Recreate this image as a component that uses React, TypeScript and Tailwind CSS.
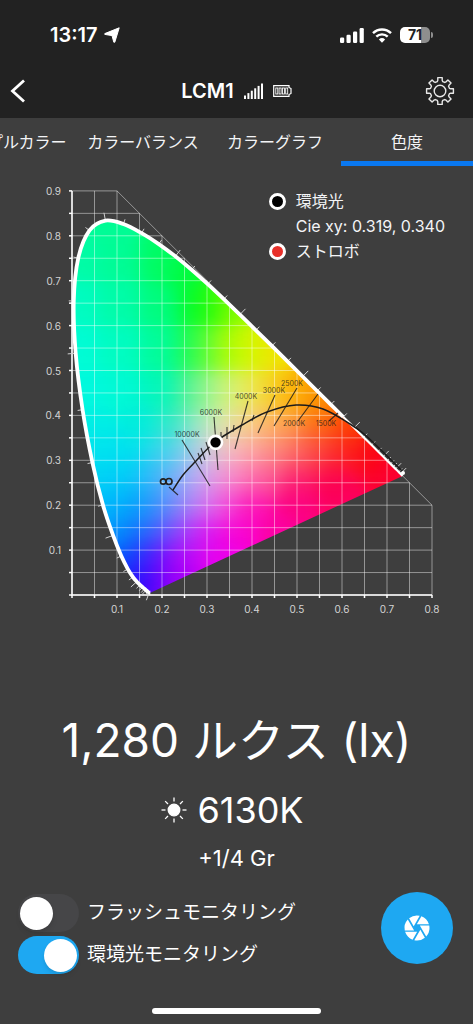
import { useState } from "react";
import { MdCamera } from "react-icons/md";

const tabs = ["サンプルカラー", "カラーバランス", "カラーグラフ", "色度"];

// CIE 1931 spectral locus: wavelength, x, y
const locus = [
  [380, 0.1741, 0.005],
  [420, 0.1714, 0.0051],
  [430, 0.1689, 0.0069],
  [440, 0.1644, 0.0109],
  [445, 0.1611, 0.0138],
  [450, 0.1566, 0.0177],
  [455, 0.151, 0.0227],
  [460, 0.144, 0.0297],
  [465, 0.1355, 0.0399],
  [470, 0.1241, 0.0578],
  [475, 0.1096, 0.0868],
  [480, 0.0913, 0.1327],
  [485, 0.0687, 0.2007],
  [490, 0.0454, 0.295],
  [495, 0.0235, 0.4127],
  [500, 0.0082, 0.5384],
  [505, 0.0039, 0.6548],
  [510, 0.0139, 0.7502],
  [515, 0.0389, 0.812],
  [520, 0.0743, 0.8338],
  [525, 0.1142, 0.8262],
  [530, 0.1547, 0.8059],
  [535, 0.1929, 0.7816],
  [540, 0.2296, 0.7543],
  [545, 0.2658, 0.7243],
  [550, 0.3016, 0.6923],
  [555, 0.3373, 0.6589],
  [560, 0.3731, 0.6245],
  [565, 0.4087, 0.5896],
  [570, 0.4441, 0.5547],
  [575, 0.4788, 0.5202],
  [580, 0.5125, 0.4866],
  [585, 0.5448, 0.4544],
  [590, 0.5752, 0.4242],
  [595, 0.6029, 0.3965],
  [600, 0.627, 0.3725],
  [605, 0.6482, 0.3514],
  [610, 0.6658, 0.334],
  [615, 0.6801, 0.3197],
  [620, 0.6915, 0.3083],
  [625, 0.7006, 0.2993],
  [630, 0.7079, 0.292],
  [635, 0.714, 0.2859],
  [640, 0.719, 0.2809],
  [650, 0.726, 0.274],
  [660, 0.73, 0.27],
  [700, 0.7347, 0.2653],
];

type Point = [number, number];

const px = (x: number) => 72 + x * 450;
const py = (y: number) => 429 - y * 449;

const toPoint = ([, x, y]: number[]): Point => [px(x), py(y)];

// Catmull-Rom spline through the points
function smooth(points: Point[]) {
  let d = `M${points[0][0]} ${points[0][1]}`;
  for (let i = 0; i < points.length - 1; i++) {
    const p0 = points[i - 1] ?? points[i];
    const p1 = points[i];
    const p2 = points[i + 1];
    const p3 = points[i + 2] ?? p2;
    d += `C${p1[0] + (p2[0] - p0[0]) / 6} ${p1[1] + (p2[1] - p0[1]) / 6} ${p2[0] - (p3[0] - p1[0]) / 6} ${p2[1] - (p3[1] - p1[1]) / 6} ${p2[0]} ${p2[1]}`;
  }
  return d;
}

const locusPath = smooth(locus.map(toPoint));
const thickLocus = smooth(locus.filter((l) => l[0] <= 595).map(toPoint));
const thinLocus = smooth(locus.filter((l) => l[0] >= 595).map(toPoint));

const wavelengthTicks = locus.slice(1, -1).map((l, i) => {
  const [ax, ay] = toPoint(locus[i]);
  const [bx, by] = toPoint(locus[i + 2]);
  const [x, y] = toPoint(l);
  const len = Math.hypot(bx - ax, by - ay) || 1;
  const size = l[0] % 20 === 0 ? 8 : 5;
  return { x, y, dx: ((by - ay) / len) * size, dy: (-(bx - ax) / len) * size };
});

// colour samples inside the gamut: x, y, r, g, b
const samples = [
  [0.08, 0.83, 0, 255, 150],
  [0.03, 0.75, 0, 255, 168],
  [0.1, 0.75, 0, 255, 150],
  [0.2, 0.75, 0, 255, 105],
  [0.25, 0.73, 0, 255, 60],
  [0.02, 0.65, 0, 255, 195],
  [0.1, 0.65, 0, 255, 170],
  [0.2, 0.65, 0, 255, 130],
  [0.27, 0.65, 0, 255, 50],
  [0.31, 0.65, 50, 255, 0],
  [0.36, 0.65, 140, 255, 0],
  [0.02, 0.55, 0, 255, 215],
  [0.1, 0.55, 0, 255, 195],
  [0.2, 0.55, 0, 255, 160],
  [0.26, 0.55, 20, 255, 90],
  [0.3, 0.55, 110, 255, 50],
  [0.35, 0.55, 180, 255, 0],
  [0.4, 0.55, 215, 250, 0],
  [0.45, 0.55, 245, 230, 0],
  [0.03, 0.45, 0, 252, 225],
  [0.1, 0.45, 0, 252, 215],
  [0.2, 0.45, 0, 250, 190],
  [0.26, 0.45, 70, 245, 150],
  [0.3, 0.45, 165, 248, 140],
  [0.35, 0.45, 212, 245, 120],
  [0.4, 0.45, 240, 235, 80],
  [0.45, 0.45, 252, 208, 30],
  [0.5, 0.45, 255, 172, 0],
  [0.56, 0.45, 255, 145, 0],
  [0.05, 0.38, 0, 240, 232],
  [0.15, 0.38, 0, 240, 222],
  [0.22, 0.38, 50, 235, 200],
  [0.28, 0.38, 155, 235, 200],
  [0.33, 0.38, 225, 235, 175],
  [0.38, 0.38, 245, 215, 145],
  [0.43, 0.38, 255, 188, 110],
  [0.48, 0.38, 255, 158, 70],
  [0.55, 0.38, 255, 112, 15],
  [0.62, 0.38, 255, 65, 0],
  [0.05, 0.32, 0, 230, 242],
  [0.12, 0.32, 0, 228, 242],
  [0.2, 0.32, 50, 215, 240],
  [0.25, 0.32, 135, 208, 240],
  [0.3, 0.32, 210, 205, 225],
  [0.35, 0.32, 250, 188, 200],
  [0.4, 0.32, 255, 168, 168],
  [0.45, 0.32, 255, 138, 132],
  [0.5, 0.32, 255, 105, 100],
  [0.55, 0.32, 255, 70, 65],
  [0.6, 0.32, 255, 35, 30],
  [0.67, 0.32, 255, 5, 20],
  [0.06, 0.26, 0, 212, 248],
  [0.12, 0.26, 0, 205, 252],
  [0.18, 0.26, 50, 185, 252],
  [0.23, 0.26, 130, 175, 252],
  [0.28, 0.26, 195, 168, 248],
  [0.33, 0.26, 242, 150, 222],
  [0.38, 0.26, 255, 122, 188],
  [0.43, 0.26, 255, 85, 152],
  [0.5, 0.26, 255, 30, 110],
  [0.58, 0.26, 255, 0, 80],
  [0.71, 0.26, 255, 0, 50],
  [0.08, 0.2, 0, 185, 255],
  [0.14, 0.2, 0, 165, 255],
  [0.19, 0.2, 60, 145, 255],
  [0.24, 0.2, 140, 138, 252],
  [0.29, 0.2, 208, 125, 246],
  [0.34, 0.2, 248, 75, 222],
  [0.4, 0.2, 255, 15, 182],
  [0.5, 0.2, 255, 0, 130],
  [0.6, 0.2, 255, 0, 98],
  [0.1, 0.14, 0, 150, 255],
  [0.15, 0.14, 20, 110, 255],
  [0.2, 0.14, 90, 88, 255],
  [0.25, 0.14, 165, 60, 255],
  [0.3, 0.14, 225, 15, 242],
  [0.37, 0.14, 252, 0, 212],
  [0.46, 0.14, 255, 0, 165],
  [0.12, 0.08, 0, 85, 255],
  [0.16, 0.08, 50, 35, 255],
  [0.2, 0.08, 125, 5, 255],
  [0.25, 0.08, 195, 0, 250],
  [0.33, 0.08, 235, 0, 240],
  [0.14, 0.03, 25, 15, 255],
  [0.17, 0.03, 85, 0, 255],
  [0.22, 0.03, 160, 0, 250],
];

// gaussian-weighted average of the samples around the point
function chromaColor(x: number, y: number) {
  let r = 0;
  let g = 0;
  let b = 0;
  let total = 0;
  for (const [sx, sy, sr, sg, sb] of samples) {
    const w = Math.exp(-((x - sx) ** 2 + (y - sy) ** 2) / 0.0018) + 1e-12;
    r += sr * w;
    g += sg * w;
    b += sb * w;
    total += w;
  }
  return `rgb(${Math.round(r / total)} ${Math.round(g / total)} ${Math.round(b / total)})`;
}

const STEP = 0.0125;
const cells: { x: number; y: number; fill: string }[] = [];
for (let i = -3; i < 64; i++) {
  for (let j = -3; j < 70; j++) {
    const x = i * STEP;
    const y = j * STEP;
    if (x + y < 1.06) cells.push({ x, y, fill: chromaColor(x + STEP / 2, y + STEP / 2) });
  }
}

const steps = (n: number) => Array.from({ length: n + 1 }, (_, i) => i / 20);

const planckian: Point[] = [
  [173, 324],
  [183, 309],
  [196, 295],
  [215, 276],
  [242, 259],
  [267, 246],
  [296, 239],
  [323, 243],
  [350, 258],
  [364, 268],
  [382, 285],
  [402, 305],
];

const isotherms = [
  [182, 274, 210, 320],
  [214, 251, 218, 304],
  [248, 235, 235, 283],
  [275, 229, 258, 267],
  [297, 222, 274, 260],
  [318, 228, 298, 255],
  [338, 247, 329, 255],
  [169, 321, 178, 329],
  [198, 287, 202, 298],
  [201, 282, 205, 294],
  [206, 276, 210, 289],
  [227, 261, 227, 273],
  [234, 259, 233, 266],
  [221, 266, 221, 273],
  [254, 249, 252, 255],
];

const temperatures = [
  { label: "10000K", x: 187, y: 271 },
  { label: "6000K", x: 211, y: 249 },
  { label: "4000K", x: 246, y: 233 },
  { label: "3000K", x: 274, y: 227 },
  { label: "2500K", x: 292, y: 220 },
  { label: "2000K", x: 294, y: 260 },
  { label: "1500K", x: 326, y: 260 },
];

function ChromaticityChart({ x, y }: { x: number; y: number }) {
  return (
    <svg viewBox="0 0 473 464" className="block w-full" role="img" aria-label="CIE xy">
      <defs>
        <clipPath id="gamut">
          <path d={`${locusPath}Z`} />
        </clipPath>
        <filter id="soften" x="0" y="0" width="1" height="1" colorInterpolationFilters="sRGB">
          <feGaussianBlur stdDeviation="4" />
        </filter>
      </defs>

      {/* colour field */}
      <g clipPath="url(#gamut)">
        <g filter="url(#soften)">
          {cells.map((c) => (
            <rect key={`${c.x},${c.y}`} x={px(c.x)} y={py(c.y + STEP)} width="6" height="6" fill={c.fill} />
          ))}
        </g>
      </g>

      {/* grid */}
      <g stroke="#fff" strokeOpacity="0.45" strokeWidth="1">
        {steps(16).map((v) => (
          <path key={`v${v}`} d={`M${px(v)} ${py(0)}V${py(Math.min(0.9, 1 - v))}`} />
        ))}
        {steps(18).map((v) => (
          <path key={`h${v}`} d={`M${px(0)} ${py(v)}H${px(Math.min(0.8, 1 - v))}`} />
        ))}
        <path d={`M${px(0.1)} ${py(0.9)}L${px(0.8)} ${py(0.2)}`} />
      </g>

      {/* axes */}
      <g stroke="#fff" strokeWidth="1.5">
        <path d={`M${px(0)} ${py(0.9)}V${py(0)}H${px(0.8)}`} fill="none" />
        {steps(16).map((v) => (
          <path key={`x${v}`} d={`M${px(v)} ${py(0)}v3`} />
        ))}
        {steps(18).map((v) => (
          <path key={`y${v}`} d={`M${px(0)} ${py(v)}h-3`} />
        ))}
      </g>
      <g fill="#d4d4d4" fontSize="10">
        {[1, 2, 3, 4, 5, 6, 7, 8].map((n) => (
          <text key={n} x={px(n / 10)} y="447" textAnchor="middle">
            0.{n}
          </text>
        ))}
        {[1, 2, 3, 4, 5, 6, 7, 8, 9].map((n) => (
          <text key={n} x="61" y={py(n / 10) + 4} textAnchor="end">
            0.{n}
          </text>
        ))}
      </g>

      {/* spectral locus */}
      {wavelengthTicks.map((t, i) => (
        <path key={i} d={`M${t.x} ${t.y}l${t.dx} ${t.dy}`} stroke="#d0d0d0" strokeWidth="1" />
      ))}
      <path d={thickLocus} fill="none" stroke="#fff" strokeWidth="3.8" />
      <path d={thinLocus} fill="none" stroke="#fff" strokeWidth="2.2" />
      <circle cx="403" cy="307" r="2" fill="#fff" />

      {/* Planckian locus */}
      <path d={smooth(planckian)} fill="none" stroke="#1c1c1c" strokeWidth="1.5" />
      <g stroke="#1c1c1c" strokeOpacity="0.85" strokeWidth="1.1">
        {isotherms.map(([x1, y1, x2, y2]) => (
          <path key={`${x1},${y1}`} d={`M${x1} ${y1}L${x2} ${y2}`} />
        ))}
      </g>
      <g fill="#1c1c1c" fillOpacity="0.8" fontSize="7" textAnchor="middle">
        {temperatures.map((t) => (
          <text key={t.label} x={t.x} y={t.y}>
            {t.label}
          </text>
        ))}
      </g>
      <g fill="none" stroke="#222" strokeWidth="1.7">
        <circle cx="163.200" cy="315.500" r="2.700" />
        <circle cx="169" cy="315.500" r="3" />
      </g>

      <circle cx={px(x)} cy={py(y)} r="6.500" fill="#000" stroke="#fff" strokeWidth="2.600" />
    </svg>
  );
}

const gearPath = (() => {
  const pts: string[] = [];
  for (let i = 0; i < 8; i++) {
    const base = i * 45 - 90;
    for (const [r, a] of [
      [9.8, -16],
      [11, -11.5],
      [13.6, -9.5],
      [13.6, 9.5],
      [11, 11.5],
      [9.8, 16],
    ]) {
      const t = ((base + a) * Math.PI) / 180;
      pts.push(`${(15 + r * Math.cos(t)).toFixed(2)} ${(15 + r * Math.sin(t)).toFixed(2)}`);
    }
  }
  return `M${pts.join("L")}Z`;
})();

function StatusBar() {
  return (
    <div className="flex h-[70px] items-center justify-between pl-[50px] pr-10">
      <div className="flex items-center gap-1.5 text-xl font-semibold">
        13:17
        <svg viewBox="0 0 16 16" className="size-4" fill="#fff" stroke="#fff" strokeLinejoin="round">
          <path d="M15.200 0.800L10.800 15.200L9.800 15.200L8 8.600L0.800 7.400L0.800 6.600Z" />
        </svg>
      </div>
      <div className="flex items-center gap-2">
        <svg viewBox="0 0 24 15" className="h-[15px] w-6" fill="#fff">
          <rect x="0" y="9.500" width="4.200" height="5.500" rx="1.200" />
          <rect x="6.500" y="6.800" width="4.200" height="8.200" rx="1.200" />
          <rect x="13" y="3.500" width="4.200" height="11.500" rx="1.200" />
          <rect x="19.600" y="0" width="4.200" height="15" rx="1.200" />
        </svg>
        <svg viewBox="0 0 20 15" className="h-[15px] w-5" fill="none" stroke="#fff" strokeWidth="2.400">
          <path d="M1 5.200A12.800 12.800 0 0 1 19 5.200" />
          <path d="M4.300 8.700A8.100 8.100 0 0 1 15.700 8.700" />
          <path d="M10 14.800L6.900 11.500A4.500 4.500 0 0 1 13.100 11.500Z" fill="#fff" stroke="none" />
        </svg>
        <div className="flex items-center gap-px">
          <div className="flex h-4 w-[30px] items-center justify-center rounded-[5px] bg-linear-to-r from-white from-70% to-[#8e8e8e] to-70% text-sm font-bold text-[#222]">
            71
          </div>
          <div className="h-1.5 w-0.5 rounded-r-full bg-[#8e8e8e]" />
        </div>
      </div>
    </div>
  );
}

function NavBar() {
  return (
    <div className="grid h-[42px] grid-cols-[1fr_auto_1fr] items-center px-2.5">
      <button type="button" aria-label="戻る">
        <svg viewBox="0 0 16 24" className="h-6 w-4" fill="none" stroke="#fff" strokeWidth="2.800">
          <path d="M14 1.500L2.500 12L14 22.500" />
        </svg>
      </button>
      <div className="flex items-center gap-2.5">
        <h1 className="text-xl font-semibold">LCM1</h1>
        <svg viewBox="0 0 19 16" className="h-4 w-[19px]" fill="#fff">
          {[0, 1, 2, 3, 4, 5].map((i) => (
            <rect key={i} x={i * 3.4} y={12.5 - i * 2.4} width="2" height={3.5 + i * 2.4} />
          ))}
        </svg>
        <svg viewBox="0 0 19 12" className="h-3 w-[19px]" fill="none" stroke="#fff">
          <path d="M0.700 0.700H16V2.500L18 3.500V8.500L16 9.500V11.300H0.700Z" strokeWidth="1.200" />
          {[0, 1, 2, 3].map((i) => (
            <rect key={i} x={2.8 + i * 3.3} y="3" width="2" height="6" strokeWidth="0.900" />
          ))}
        </svg>
      </div>
      <button type="button" aria-label="設定" className="mr-2 justify-self-end">
        <svg viewBox="0 0 30 30" className="size-[30px]" fill="none" stroke="#e8e8e8" strokeWidth="1.400" strokeLinejoin="round">
          <path d={gearPath} />
          <circle cx="15" cy="15" r="5.800" />
        </svg>
      </button>
    </div>
  );
}

function Toggle({ label, checked, onChange }: { label: string; checked: boolean; onChange: (v: boolean) => void }) {
  return (
    <label className="flex items-center gap-2 text-[19px]">
      <input
        type="checkbox"
        checked={checked}
        onChange={(e) => onChange(e.target.checked)}
        className="flex h-[38px] w-[61px] appearance-none items-center rounded-full bg-[#464648] px-0.5 before:size-[33px] before:rounded-full before:bg-white before:shadow-md checked:justify-end checked:bg-[#1ea8f2]"
      />
      {label}
    </label>
  );
}

export default function App() {
  const [tab, setTab] = useState("色度");
  const [flash, setFlash] = useState(false);
  const [ambient, setAmbient] = useState(true);

  return (
    <div className="flex min-h-screen flex-col bg-[#3e3e3e] font-['Inter','Noto_Sans_CJK_JP',sans-serif] text-white">
      <header className="bg-[#222] pb-1.5">
        <StatusBar />
        <NavBar />
      </header>

      <nav className="flex justify-end overflow-hidden">
        {tabs.map((t) => (
          <button
            key={t}
            type="button"
            onClick={() => setTab(t)}
            className={[
              "h-12 w-[132px] shrink-0 border-b-5 pt-1 whitespace-nowrap text-gray-100",
              t === tab ? "border-[#0a78f0]" : "border-transparent",
            ].join(" ")}
          >
            {t}
          </button>
        ))}
      </nav>

      <main className="flex flex-col">
        <section className="relative">
          <ChromaticityChart x={0.319} y={0.34} />
          <ul className="absolute top-[23px] right-7 leading-[25px] text-gray-100">
            <li className="flex items-center gap-2.5">
              <span className="size-[17px] rounded-full border-3 border-white bg-black" />
              環境光
            </li>
            <li className="pl-[27px]">Cie xy: 0.319, 0.340</li>
            <li className="flex items-center gap-2.5">
              <span className="size-[17px] rounded-full border-3 border-white bg-[#e8302a]" />
              ストロボ
            </li>
          </ul>
        </section>

        <section className="mt-20 flex flex-col items-center">
          <p className="text-[46px] leading-[60px]">1,280 ルクス (lx)</p>
          <p className="mt-4 flex items-center gap-2.5 pr-2 text-4xl leading-12">
            <svg viewBox="0 0 26 26" className="size-[26px]" stroke="#fff" strokeWidth="1.300">
              <circle cx="13" cy="13" r="5.800" fill="#fff" />
              {[0, 45, 90, 135, 180, 225, 270, 315].map((a) => (
                <path key={a} d="M13 0.500V4.500" transform={`rotate(${a} 13 13)`} />
              ))}
            </svg>
            6130K
          </p>
          <p className="mt-2 text-[22px] leading-8">+1/4 Gr</p>
        </section>

        <section className="mt-[18px] flex items-start justify-between pr-5 pl-[18px]">
          <div className="flex flex-col gap-1 py-0.5">
            <Toggle label="フラッシュモニタリング" checked={flash} onChange={setFlash} />
            <Toggle label="環境光モニタリング" checked={ambient} onChange={setAmbient} />
          </div>
          <button
            type="button"
            aria-label="測定"
            className="flex size-18 items-center justify-center rounded-full bg-[#1ea8f2]"
          >
            <MdCamera className="size-[30px]" />
          </button>
        </section>
      </main>

      <div className="mx-auto mt-auto mb-2.5 h-1.5 w-[169px] rounded-full bg-white" />
    </div>
  );
}
